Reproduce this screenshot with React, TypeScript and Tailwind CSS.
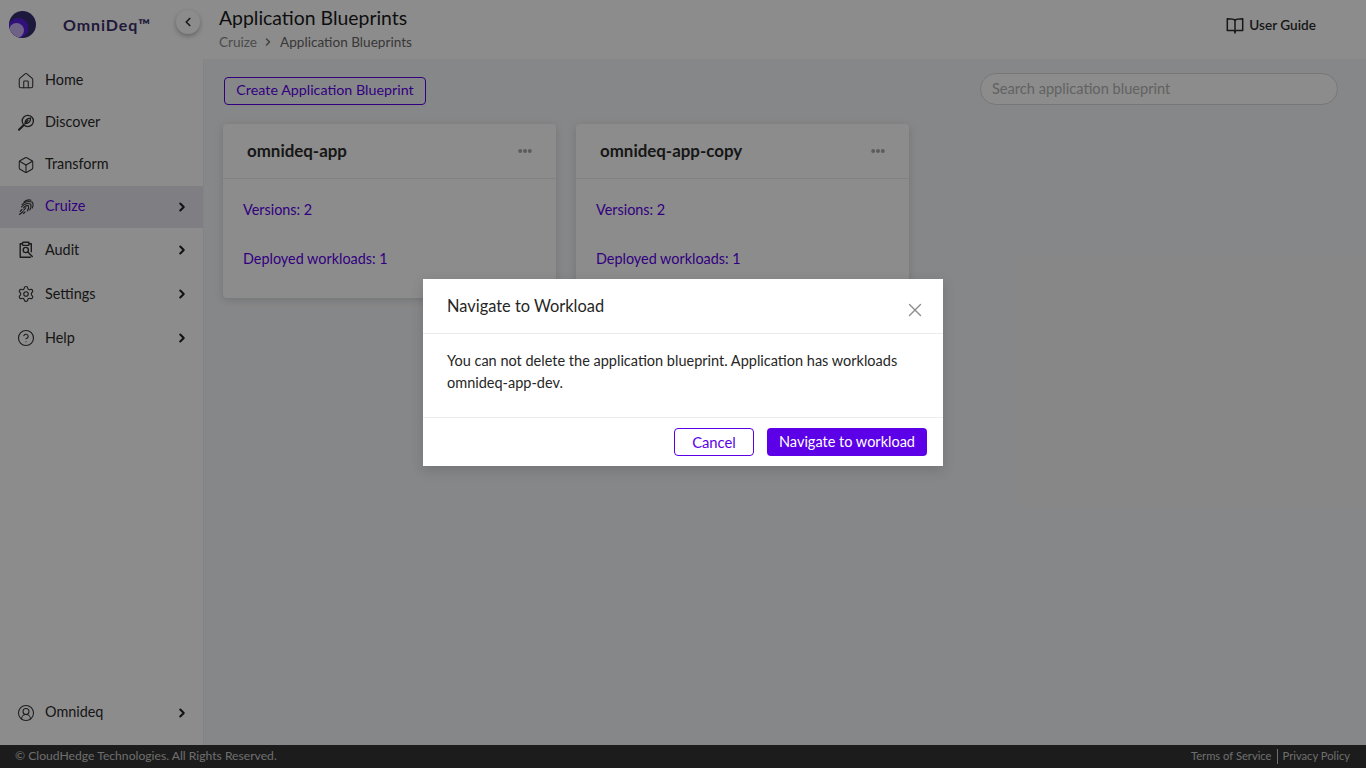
import React from "react";
import { Box, ChevronLeft, ChevronRight, CircleHelp, CircleUserRound, House, Settings, X } from "lucide-react";

const ff = "font-['Lato','Noto_Sans',sans-serif]";

function Discover() {
  return (
    <svg width="18" height="18" viewBox="0 0 18 18" fill="none" stroke="currentColor" strokeWidth="1.3" strokeLinecap="round">
      <circle cx="10.800" cy="7" r="5.600" />
      <path d="M8 9.500c0-3 2-5 5.500-5.300.2 3.300-1.800 5.500-5.500 5.300zM8 9.500l3-3" />
      <path d="M6.800 11 2 15.800" strokeWidth="2" />
    </svg>
  );
}
function Finger() {
  return (
    <svg width="18" height="18" viewBox="0 0 18 18" fill="none" stroke="currentColor" strokeWidth="1.1" strokeLinecap="round">
      <path d="M7 4C9 2.300 11.500 1.500 14 2.200" />
      <path d="M5 6.500C7.500 3.800 11.500 2.800 15.500 4.200c1 1.800.8 3.800-.2 5.800" />
      <path d="M4.500 9C7 6 10.500 4.900 13.600 6c.8 1.800.4 4-.8 6" />
      <path d="M6.500 9.800C8 8 9.800 7.200 11.500 7.800c.5 1.700 0 3.500-1.200 5.200" />
      <path d="M8.800 9.800c-.8.800-1.400 1.600-2 2.500" />
      <path d="M5 11.500l-1.800 1.800M6 13.500l-3.500 3M8 14l-1.500 1.500" />
    </svg>
  );
}
function Audit() {
  return (
    <svg width="18" height="18" viewBox="0 0 18 18" fill="none" stroke="currentColor" strokeWidth="1.4" strokeLinecap="round" strokeLinejoin="round">
      <path d="M5.500 2.800H3.200v13.400h10.300M12 2.800h2.300v8" />
      <rect x="5.500" y="1.200" width="6.500" height="3.200" rx=".6" />
      <circle cx="8.800" cy="9" r="2.600" />
      <path d="m10.800 11 4.500 4.500" />
    </svg>
  );
}
function Book() {
  return (
    <svg width="18" height="18" viewBox="0 0 18 18" fill="none" stroke="currentColor" strokeWidth="1.5" strokeLinejoin="round" strokeLinecap="round">
      <path d="M9 4.200C8 3 6.500 2.800 1.300 2.800v11.600H7.500c1 0 1.500.5 1.500 1.600 0-1.100.5-1.600 1.500-1.600h6.200V2.800C11.500 2.800 10 3 9 4.200z" />
      <path d="M9 4.200V17" />
    </svg>
  );
}
function Logo() {
  return (
    <svg width="27" height="27" viewBox="0 0 27 27">
      <defs>
        <clipPath id="logo-clip">
          <circle cx="13.500" cy="13.500" r="13.500" />
        </clipPath>
      </defs>
      <circle cx="13.500" cy="13.500" r="13.500" fill="#362e6e" />
      <g clipPath="url(#logo-clip)">
        <circle cx="9.500" cy="17" r="10" fill="#5c1ee0" />
        <circle cx="7.500" cy="19.500" r="7.500" fill="#c8b4f5" />
      </g>
    </svg>
  );
}
function Dots() {
  return (
    <svg width="14" height="6" viewBox="0 0 14 6" fill="#a8a8a8">
      <circle cx="2.200" cy="3" r="2" />
      <circle cx="7" cy="3" r="2" />
      <circle cx="11.800" cy="3" r="2" />
    </svg>
  );
}

function NavItem({ icon, label, active, chevron, tall }: { icon: React.ReactNode; label: string; active?: boolean; chevron?: boolean; tall?: boolean }) {
  return (
    <div className={`flex items-center pl-[17px] pr-[14px] ${tall ? "h-[44px]" : "h-[42px]"} ${active ? "bg-[#e8e6ee] text-[#5c00e8]" : "text-[#2b2b2b]"}`}>
      <span className="w-[18px] h-[18px] flex items-center justify-center text-[#333] shrink-0">{icon}</span>
      <span className={`ml-[10px] flex-1 text-[14.400px] ${tall ? "" : "mb-[2px]"}`}>{label}</span>
      {chevron && <ChevronRight size={14} strokeWidth={3.5} className="text-[#222]" />}
    </div>
  );
}

function Card({ name }: { name: string }) {
  return (
    <div className="w-[333px] h-[174px] bg-white rounded-[4px] shadow-[0_2px_8px_rgba(0,0,0,0.15)]">
      <div className="h-[55px] border-b border-[#ececec] flex items-center justify-between pl-6 pr-6">
        <span className="text-[16.900px] font-bold text-[#2b2b2b]">{name}</span>
        <Dots />
      </div>
      <div className="pl-5 pt-[21px] text-[14.400px] text-[#5c00e8]">
        <div className="leading-5">Versions: 2</div>
        <div className="leading-5 mt-[29px]">Deployed workloads: 1</div>
      </div>
    </div>
  );
}

export default function App() {
  return (
    <div className={`relative w-[1366px] h-[768px] overflow-hidden flex flex-col bg-[#f5f6f8] ${ff}`}>
      <div className="flex flex-1 min-h-0">
        <aside className="w-[204px] shrink-0 bg-white flex flex-col">
          <div className="h-[59px] flex items-start pl-[9px] pt-[11px] relative">
            <Logo />
            <span className="ml-[27px] text-[16px] leading-[28px] font-bold tracking-[0.9px] text-[#3a2f6b]">OmniDeq™</span>
            <div className="absolute left-[176px] top-[10px] w-[24px] h-[24px] rounded-full bg-white shadow-[0_2px_5px_rgba(0,0,0,0.3)] flex items-center justify-center">
              <ChevronLeft size={14} strokeWidth={3} className="text-[#333]" />
            </div>
          </div>
          <div className="flex-1 flex flex-col border-r border-[#eceef0]">
            <nav className="pt-[1px]">
              <NavItem icon={<House size={18} strokeWidth={1.4} />} label="Home" />
              <NavItem icon={<Discover />} label="Discover" />
              <NavItem icon={<Box size={18} strokeWidth={1.4} />} label="Transform" />
              <NavItem icon={<Finger />} label="Cruize" active chevron />
              <NavItem icon={<Audit />} label="Audit" chevron tall />
              <NavItem icon={<Settings size={18} strokeWidth={1.5} />} label="Settings" chevron tall />
              <NavItem icon={<CircleHelp size={18} strokeWidth={1.5} />} label="Help" chevron tall />
            </nav>
            <div className="mt-auto pb-[11px]">
              <NavItem icon={<CircleUserRound size={18} strokeWidth={1.4} />} label="Omnideq" chevron />
            </div>
          </div>
        </aside>
        <div className="flex-1 flex flex-col min-w-0">
          <header className="h-[59px] bg-white flex items-start justify-between pl-[15px] pr-[50px]">
            <div>
              <div className="text-[19.400px] leading-6 mt-[6px] text-[#1a1a1a]">Application Blueprints</div>
              <div className="flex items-center text-[13.600px] leading-5 mt-[2px] text-[#8a8a8a]">
                Cruize
                <ChevronRight size={12} strokeWidth={3} className="mx-[5px] text-[#777]" />
                <span className="ml-[1px] text-[#666]">Application Blueprints</span>
              </div>
            </div>
            <div className="flex items-center gap-[5px] mt-[15px] text-[13.600px] font-semibold text-[#2b2b2b]">
              <Book />
              User Guide
            </div>
          </header>
          <main className="flex-1 pl-[19px] pr-[28px]">
            <div className="flex items-center justify-between pt-[14px] pl-[1px]">
              <button className="h-[28px] w-[202px] mt-[4px] pb-[3px] border border-[#5c00e8] rounded-[4px] text-[14.300px] text-[#5c00e8]">Create Application Blueprint</button>
              <div className="w-[358px] h-[32px] border border-[#d9d9d9] rounded-full bg-white flex items-center pl-[11px] text-[14.600px] text-[#b3b3b3]">Search application blueprint</div>
            </div>
            <div className="flex gap-[20px] mt-[19px]">
              <Card name="omnideq-app" />
              <Card name="omnideq-app-copy" />
            </div>
          </main>
        </div>
      </div>
      <footer className="h-[23px] bg-[#333] flex items-center justify-between pl-[15px] pr-[16px] text-[#c8c8c8]">
        <span className="text-[12.150px]">© CloudHedge Technologies. All Rights Reserved.</span>
        <span className="flex items-center text-[11.200px]">
          <span>Terms of Service</span>
          <span className="w-px h-[15px] bg-[#c8c8c8] mx-[5px]" />
          <span>Privacy Policy</span>
        </span>
      </footer>

      <div className="absolute inset-0 bg-black/45" />

      <div className="absolute left-[423px] top-[279px] w-[520px] h-[187px] bg-white shadow-[0_4px_12px_rgba(0,0,0,0.15)] flex flex-col">
        <div className="h-[55px] border-b border-[#ececec] flex items-center pl-6 relative">
          <span className="text-[16.400px] text-[#262626]">Navigate to Workload</span>
          <X size={22} strokeWidth={1.5} className="absolute left-[481px] top-[20px] text-[#8c8c8c]" />
        </div>
        <div className="h-[84px] border-b border-[#ececec] pl-6 pr-6 pt-[16px] text-[14.500px] leading-[22px] text-[#262626]">
          You can not delete the application blueprint. Application has workloads omnideq-app-dev.
        </div>
        <div className="flex-1 flex items-start justify-end gap-[13px] pr-[16px] pt-[10px]">
          <button className="w-[80px] h-[28px] border border-[#5c00e8] rounded-[4px] text-[14.800px] text-[#5c00e8]">Cancel</button>
          <button className="w-[160px] h-[28px] bg-[#5c00e8] rounded-[4px] text-[14.500px] text-white">Navigate to workload</button>
        </div>
      </div>
    </div>
  );
}
